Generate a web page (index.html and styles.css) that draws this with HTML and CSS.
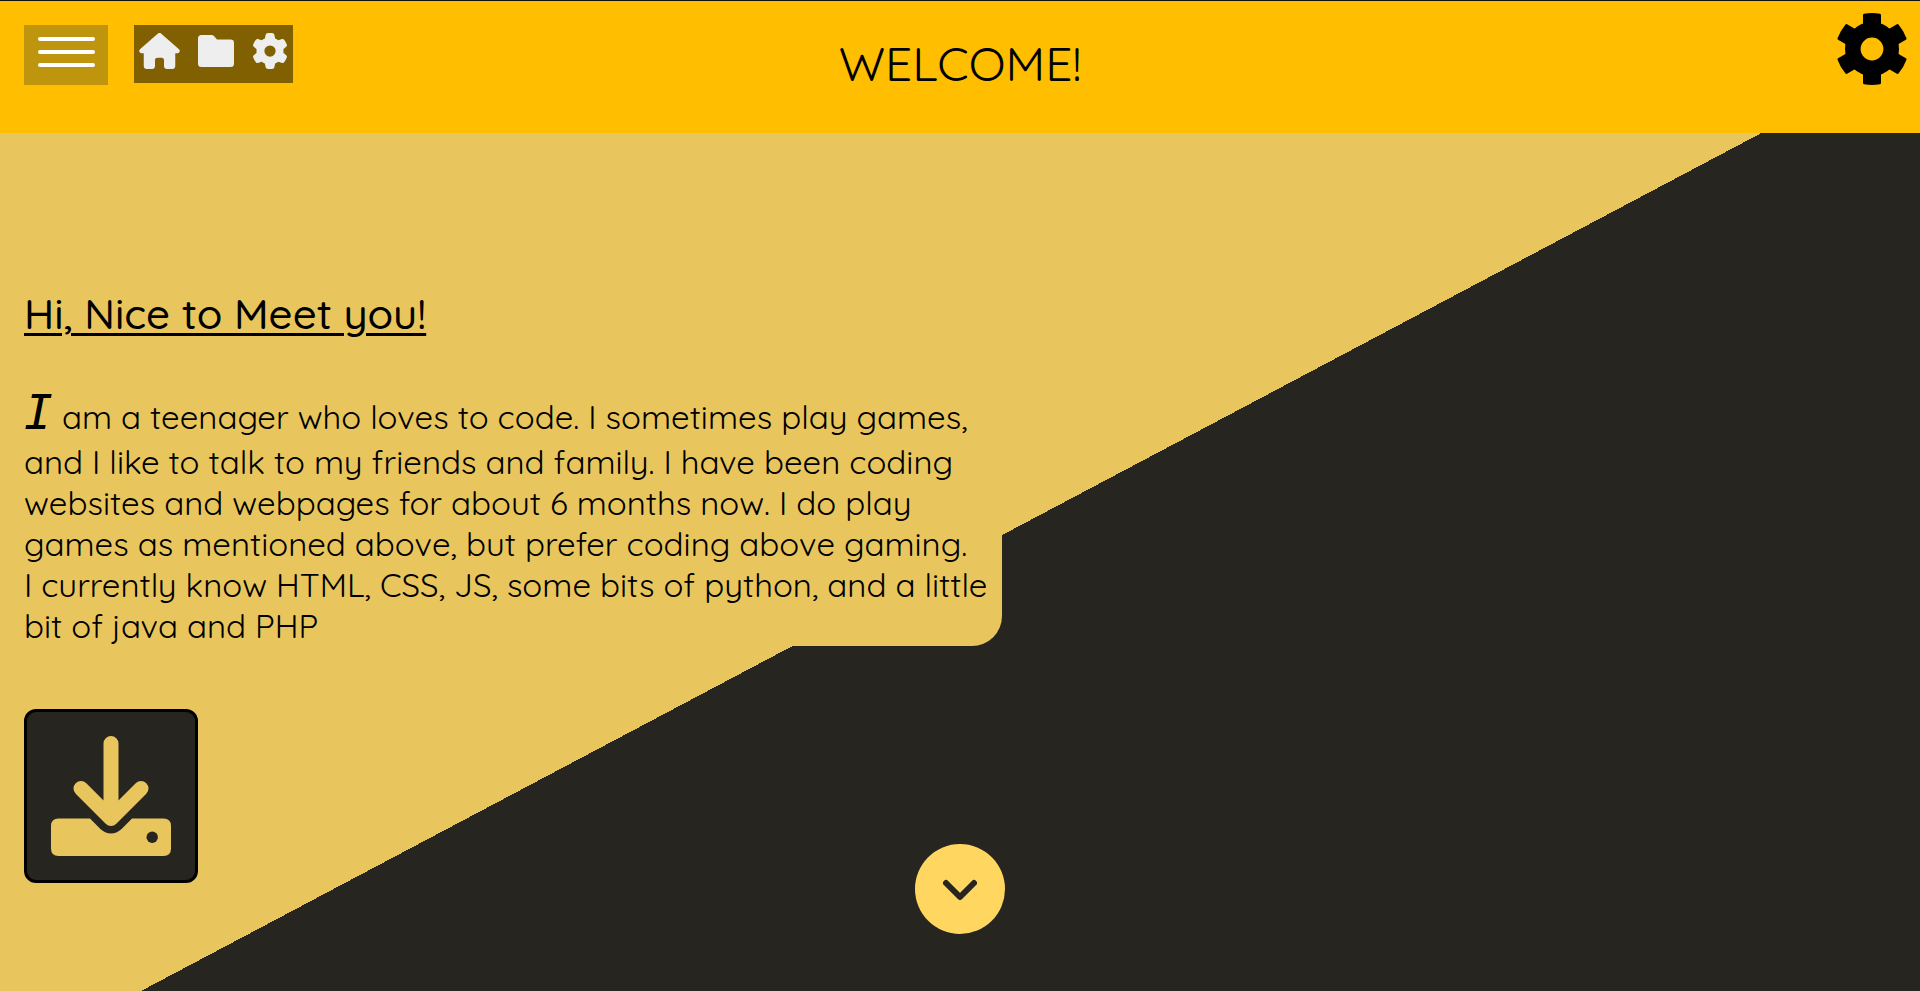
FILE: index.html
```
<!DOCTYPE html>
<html lang="en">
<head>
<meta charset="utf-8">
<meta name="viewport" content="width=device-width, initial-scale=1">
<title>Welcome</title>
<link rel="stylesheet" href="styles.css">
</head>
<body>
<header class="topbar">
  <div class="topbar-left">
    <button class="menu-button" type="button" aria-label="Menu">
      <span class="menu-bar"></span>
      <span class="menu-bar"></span>
      <span class="menu-bar"></span>
    </button>
    <nav class="quick-nav" aria-label="Quick links">
      <a href="#home" aria-label="Home">
        <svg class="icon-home" viewBox="0 0 576 512" aria-hidden="true"><path d="M575.8 255.5c0 18-15 32.1-32 32.1h-32l.7 160.2c0 2.7-.2 5.4-.5 8.1V472c0 22.1-17.9 40-40 40H456c-1.1 0-2.2 0-3.3-.1c-1.4 .1-2.8 .1-4.2 .1H416 392c-22.1 0-40-17.9-40-40V448 384c0-17.7-14.3-32-32-32H256c-17.7 0-32 14.3-32 32v64 24c0 22.1-17.9 40-40 40H160 128.1c-1.5 0-3-.1-4.5-.2c-1.2 .1-2.4 .2-3.6 .2H104c-22.1 0-40-17.9-40-40V360c0-.9 0-1.9 .1-2.8V287.6H32c-18 0-32-14-32-32.1c0-9 3-17 10-24L266.4 8c7-7 15-8 22-8s15 2 21 7L564.8 231.5c8 7 12 15 11 24z"/></svg>
      </a>
      <a href="#projects" aria-label="Projects">
        <svg class="icon-square" viewBox="0 0 36 36" aria-hidden="true"><path d="M3.500 2H13.500Q15 2 16 3L19 6.600H32.500Q36 6.600 36 10V30.500Q36 34 32.500 34H3.500Q0 34 0 30.500V5.500Q0 2 3.500 2Z"/></svg>
      </a>
      <a href="#options" aria-label="Options">
        <svg class="icon-square" viewBox="0 0 512 512" aria-hidden="true"><path d="M495.9 166.6c3.2 8.700 .5 18.400-6.400 24.600l-43.300 39.400c1.100 8.300 1.700 16.800 1.700 25.400s-.6 17.100-1.700 25.400l43.300 39.400c6.900 6.200 9.600 15.900 6.400 24.600c-4.400 11.900-9.700 23.300-15.800 34.300l-4.700 8.100c-6.600 11-14 21.400-22.100 31.200c-5.900 7.200-15.700 9.600-24.500 6.800l-55.700-17.700c-13.400 10.300-28.200 18.900-44 25.400l-12.500 57.100c-2 9.100-9 16.300-18.200 17.800c-13.800 2.300-28 3.500-42.500 3.500s-28.700-1.200-42.500-3.500c-9.200-1.500-16.200-8.700-18.200-17.800l-12.500-57.100c-15.800-6.500-30.600-15.100-44-25.400L83.100 425.900c-8.800 2.800-18.600 .3-24.500-6.800c-8.100-9.800-15.500-20.200-22.100-31.200l-4.700-8.100c-6.100-11-11.400-22.400-15.800-34.300c-3.200-8.700-.5-18.400 6.400-24.600l43.300-39.400C64.600 273.100 64 264.600 64 256s.6-17.100 1.700-25.400L22.400 191.200c-6.900-6.200-9.600-15.900-6.400-24.600c4.400-11.900 9.700-23.300 15.800-34.300l4.700-8.100c6.600-11 14-21.400 22.100-31.200c5.900-7.200 15.700-9.600 24.500-6.800l55.700 17.700c13.400-10.300 28.200-18.900 44-25.400l12.500-57.100c2-9.100 9-16.300 18.200-17.800C227.300 1.200 241.500 0 256 0s28.700 1.200 42.500 3.500c9.200 1.500 16.200 8.700 18.200 17.800l12.500 57.100c15.800 6.500 30.600 15.100 44 25.400l55.700-17.700c8.800-2.800 18.600-.3 24.500 6.800c8.100 9.800 15.500 20.200 22.100 31.200l4.700 8.100c6.100 11 11.400 22.400 15.800 34.300zM256 336a80 80 0 1 0 0-160 80 80 0 1 0 0 160z"/></svg>
      </a>
    </nav>
  </div>
  <h1 class="title">WELCOME!</h1>
  <button class="settings-button" type="button" aria-label="Settings">
    <svg class="settings-icon" viewBox="-36 -36 72 72" aria-hidden="true">
      <defs><path id="tooth" d="M-9 -22V-34Q-9 -35 -8 -35.200Q0 -36.600 8 -35.200Q9 -35 9 -34V-22Z"/></defs>
      <circle r="19.200" fill="none" stroke="#000" stroke-width="15.600"/>
      <use href="#tooth"/>
      <use href="#tooth" transform="rotate(60)"/>
      <use href="#tooth" transform="rotate(120)"/>
      <use href="#tooth" transform="rotate(180)"/>
      <use href="#tooth" transform="rotate(240)"/>
      <use href="#tooth" transform="rotate(300)"/>
    </svg>
  </button>
</header>
<main class="hero">
  <section class="intro">
    <h2 class="greeting">Hi, Nice to Meet you!</h2>
    <p class="about"><span class="initial">I</span> am a teenager who loves to code. I sometimes play games,<br>and I like to talk to my friends and family. I have been coding<br>websites and webpages for about 6 months now. I do play<br>games as mentioned above, but prefer coding above gaming.<br>I currently know HTML, CSS, JS, some bits of python, and a little<br>bit of java and PHP</p>
  </section>
  <button class="download-button" type="button" aria-label="Download">
    <svg class="download-icon" viewBox="0 0 120 120" aria-hidden="true">
      <path class="download-tray" d="M7.500 82.500H39L49.400 92.900Q60 102 70.600 92.900L81 82.500H112.500Q120 82.500 120 90V112.500Q120 120 112.500 120H7.500Q0 120 0 112.500V90Q0 82.500 7.500 82.500Z"/>
      <path class="download-arrow" d="M60 7.500V82.500M30 52.500L60 82.500L90 52.500"/>
      <circle class="download-light" cx="101.200" cy="101.300" r="5.700"/>
    </svg>
  </button>
  <a class="scroll-button" href="#more" aria-label="Scroll down">
    <svg class="scroll-icon" viewBox="0 0 90 90" aria-hidden="true"><path d="M31 39L45 53L59 39"/></svg>
  </a>
</main>
</body>
</html>
```
FILE: styles.css
```
* {
  box-sizing: border-box;
}

body {
  min-height: 100vh;
  margin: 0;
  display: flex;
  flex-direction: column;
  background: #272520;
  color: #000;
  font-family: Quicksand, Lato, sans-serif;
}

button {
  margin: 0;
  padding: 0;
  border: 0;
  background: none;
  cursor: pointer;
}

svg {
  display: block;
}

.topbar {
  display: grid;
  grid-template-columns: 1fr auto 1fr;
  align-items: start;
  min-height: 133px;
  padding: 12px 12px 0;
  border-top: 1px solid #111;
  background: #ffbf00;
}

.topbar-left {
  display: flex;
  align-items: flex-start;
  gap: 26px;
  padding: 12px 0 0 12px;
}

.menu-button {
  display: flex;
  flex-direction: column;
  gap: 9px;
  width: 84px;
  height: 60px;
  padding: 12px 13px 0 14px;
  background: #bf950d;
}

.menu-bar {
  height: 4px;
  border-radius: 2px;
  background: #fff;
}

.quick-nav {
  display: flex;
  gap: 18px;
  height: 58px;
  padding: 8px 5px;
  background: #806000;
  fill: #eee;
}

.icon-home {
  width: 41px;
  height: 36px;
}

.icon-square {
  width: 36px;
  height: 36px;
}

.title {
  margin: 0;
  padding-top: 20px;
  font-size: 48px;
  font-weight: 400;
  line-height: 60px;
}

.settings-button {
  justify-self: end;
}

.settings-icon {
  width: 72px;
  height: 72px;
}

.hero {
  position: relative;
  flex: 1;
  padding-bottom: 108px;
  background: linear-gradient(152.1deg, #e8c65d 49.75%, #272520 49.75%);
}

.intro {
  width: fit-content;
  padding: 155px 15px 0 24px;
  border-bottom-right-radius: 30px;
  background: #e8c65d;
}

.greeting {
  margin: 0 0 44px;
  font-size: 42px;
  font-weight: 500;
  line-height: 52px;
  text-decoration: underline;
  text-decoration-thickness: 3px;
  text-underline-offset: 4px;
}

.about {
  margin: 0;
  font-size: 33px;
  font-weight: 400;
  line-height: 41px;
}

.initial {
  font-family: "DejaVu Sans Mono", monospace;
  font-size: 48px;
  font-style: italic;
  font-weight: 400;
  line-height: 57px;
}

.download-button {
  display: grid;
  place-items: center;
  width: 174px;
  height: 174px;
  margin: 63px 0 0 24px;
  border: 3px solid #000;
  border-radius: 12px;
  background: #272520;
}

.download-icon {
  width: 120px;
  height: 120px;
}

.download-tray {
  fill: #e8c65d;
}

.download-arrow {
  fill: none;
  stroke: #e8c65d;
  stroke-width: 15;
  stroke-linecap: round;
  stroke-linejoin: round;
}

.download-light {
  fill: #272520;
}

.scroll-button {
  position: absolute;
  bottom: 57px;
  left: calc(50% - 45px);
  width: 90px;
  height: 90px;
  border-radius: 50%;
  background: #ffd760;
}

.scroll-icon {
  fill: none;
  stroke: #272520;
  stroke-width: 6;
  stroke-linecap: round;
  stroke-linejoin: round;
}
```
